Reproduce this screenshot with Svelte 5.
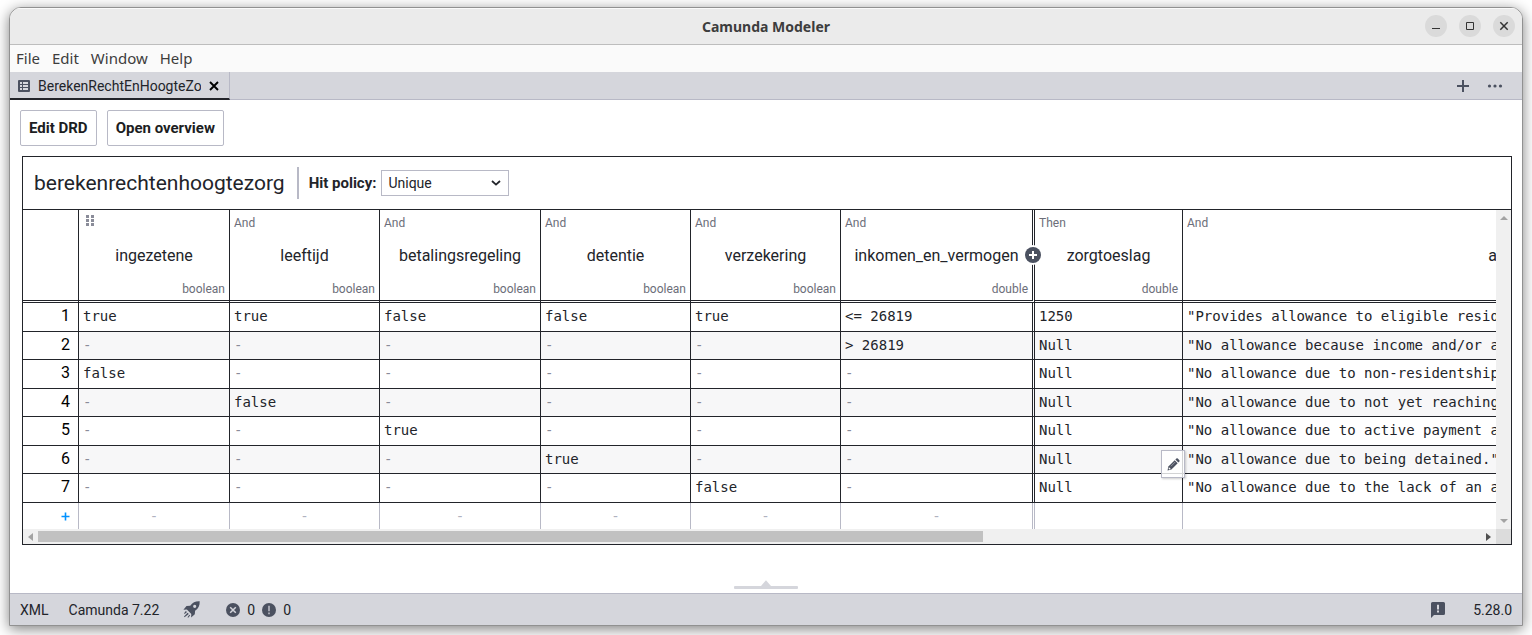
<script>
  const menu = ['File', 'Edit', 'Window', 'Help'];

  const columns = [
    { clause: '', name: 'ingezetene', type: 'boolean' },
    { clause: 'And', name: 'leeftijd', type: 'boolean' },
    { clause: 'And', name: 'betalingsregeling', type: 'boolean' },
    { clause: 'And', name: 'detentie', type: 'boolean' },
    { clause: 'And', name: 'verzekering', type: 'boolean' },
    { clause: 'And', name: 'inkomen_en_vermogen', type: 'double', last: true },
    { clause: 'Then', name: 'zorgtoeslag', type: 'double' },
    { clause: 'And', name: 'a', type: '' }
  ];

  const rules = [
    ['true', 'true', 'false', 'false', 'true', '<= 26819', '1250', '"Provides allowance to eligible resid'],
    ['-', '-', '-', '-', '-', '> 26819', 'Null', '"No allowance because income and/or a'],
    ['false', '-', '-', '-', '-', '-', 'Null', '"No allowance due to non-residentship'],
    ['-', 'false', '-', '-', '-', '-', 'Null', '"No allowance due to not yet reaching'],
    ['-', '-', 'true', '-', '-', '-', 'Null', '"No allowance due to active payment a'],
    ['-', '-', '-', 'true', '-', '-', 'Null', '"No allowance due to being detained."'],
    ['-', '-', '-', '-', 'false', '-', 'Null', '"No allowance due to the lack of an a']
  ];

  let policy = $state('Unique');
</script>

<div class="desktop">
  <div class="window">
    <header class="titlebar">
      <h1>Camunda Modeler</h1>
      <div class="controls">
        <button aria-label="Minimize"><svg width="22" height="22" viewBox="0 0 22 22"><path d="M7 13.5h8" /></svg></button>
        <button aria-label="Maximize"><svg width="22" height="22" viewBox="0 0 22 22"><path d="M7.5 7.5h7v7h-7z" /></svg></button>
        <button aria-label="Close"><svg width="22" height="22" viewBox="0 0 22 22"><path d="M7.3 7.3l7.4 7.4M14.7 7.3l-7.4 7.4" stroke-width="1.5" /></svg></button>
      </div>
    </header>

    <nav class="menubar">
      {#each menu as item}<button>{item}</button>{/each}
    </nav>

    <div class="tabs">
      <div class="tab">
        <svg width="12" height="12" viewBox="0 0 12 12">
          <rect width="12" height="12" rx="1" fill="#4b5160" />
          <path d="M2 2h2v2H2zM5 2h5v2H5zM2 5h2v2H2zM5 5h5v2H5zM2 8h2v2H2zM5 8h5v2H5z" fill="#d5d6dc" />
        </svg>
        <button class="tab-name">BerekenRechtEnHoogteZo</button>
        <button class="tab-close" aria-label="Close tab">
          <svg width="10" height="10" viewBox="0 0 10 10"><path d="M1 1l8 8M9 1l-8 8" stroke="#000" stroke-width="1.9" /></svg>
        </button>
      </div>
      <div class="tab-actions">
        <button aria-label="New tab"><svg width="12" height="12" viewBox="0 0 12 12"><path d="M6 0v12M0 6h12" stroke="#4b5160" stroke-width="2" /></svg></button>
        <button aria-label="More tabs"><svg width="16" height="4" viewBox="0 0 16 4" fill="#4b5160"><circle cx="2.5" cy="2" r="1.6" /><circle cx="8" cy="2" r="1.6" /><circle cx="13.5" cy="2" r="1.6" /></svg></button>
      </div>
    </div>

    <main>
      <div class="toolbar">
        <button>Edit DRD</button>
        <button>Open overview</button>
      </div>

      <section class="decision">
        <div class="decision-head">
          <h2>berekenrechtenhoogtezorg</h2>
          <div class="policy">
            <label for="hit-policy">Hit policy:</label>
            <div class="select">
              <select id="hit-policy" bind:value={policy}>
                <option>Unique</option>
                <option>First</option>
                <option>Collect</option>
              </select>
              <svg width="10" height="6" viewBox="0 0 10 6"><path d="M1 1l4 3.6L9 1" fill="none" stroke="#22242a" stroke-width="1.8" /></svg>
            </div>
          </div>
        </div>

        <div class="viewport">
          <div class="scroller">
            <table>
              <colgroup>
                <col class="c-index" /><col class="c-first" /><col class="c-std" /><col class="c-wide" />
                <col class="c-std" /><col class="c-std" /><col class="c-input-last" /><col class="c-output" /><col class="c-text" />
              </colgroup>
              <thead>
                <tr>
                  <th></th>
                  {#each columns as col}
                    <th class:edge={col.last}>
                      <div class="head-cell">
                        <span class="clause">
                          {#if col.clause}{col.clause}{:else}
                            <svg width="9" height="12" viewBox="0 0 9 12" fill="#8a8c99">
                              <path d="M0 0h3v3H0zM5 0h3v3H5zM0 4h3v3H0zM5 4h3v3H5zM0 8h3v3H0zM5 8h3v3H5z" />
                            </svg>
                          {/if}
                        </span>
                        <span class="name">{col.name}</span>
                        <span class="type">{col.type}</span>
                        {#if col.last}
                          <button class="add-column" aria-label="Add input">
                            <svg width="20" height="20" viewBox="0 0 20 20">
                              <circle cx="10" cy="10" r="10" fill="#fff" />
                              <circle cx="10" cy="10" r="8" fill="#4b5160" />
                              <path d="M10 6v8M6 10h8" stroke="#fff" stroke-width="2" />
                            </svg>
                          </button>
                        {/if}
                      </div>
                    </th>
                  {/each}
                </tr>
              </thead>
              <tbody>
                {#each rules as rule, r}
                  <tr>
                    <td class="index">{r + 1}</td>
                    {#each rule as value, c}
                      <td class:edge={c === 5} class:empty={value === '-'} class:anchor={r === 5 && c === 6}>
                        {value}
                        {#if r === 5 && c === 6}
                          <button class="edit" aria-label="Edit cell">
                            <svg width="13" height="13" viewBox="0 0 13 13" fill="#4b5160">
                              <path d="M0.5 12.5l0.9-3.9 6.3-6.3 3 3-6.3 6.3z" />
                              <path d="M8.4 1.6l1-1q0.7-0.6 1.4 0l1.6 1.6q0.6 0.7 0 1.4l-1 1z" />
                              <path d="M2 9.2l1.8 1.8-1.5 0.4-0.7-0.7z" fill="#fff" />
                              <path d="M4 8.2l4.2-4.2" stroke="#a7a9b3" stroke-width="0.8" />
                            </svg>
                          </button>
                        {/if}
                      </td>
                    {/each}
                  </tr>
                {/each}
              </tbody>
              <tfoot>
                <tr>
                  <td class="index">
                    <button class="add-rule" aria-label="Add rule"><svg width="9" height="9" viewBox="0 0 9 9"><path d="M4.5 0.5v8M0.5 4.5h8" stroke="#0091ff" stroke-width="1.6" /></svg></button>
                  </td>
                  {#each columns as _, c}<td class:edge={c === 5}>{c < 6 ? '-' : ''}</td>{/each}
                </tr>
              </tfoot>
            </table>
          </div>
          <div class="vbar">
            <svg width="8" height="4" viewBox="0 0 8 4"><path d="M0 4l4-4 4 4z" fill="#a3a3a3" /></svg>
            <svg width="8" height="4" viewBox="0 0 8 4"><path d="M0 0l4 4 4-4z" fill="#a3a3a3" /></svg>
          </div>
          <div class="hbar">
            <svg width="5" height="8" viewBox="0 0 5 8"><path d="M5 0L0 4l5 4z" fill="#a3a3a3" /></svg>
            <div class="track"><div class="thumb"></div></div>
            <svg width="5" height="8" viewBox="0 0 5 8"><path d="M0 0l5 4-5 4z" fill="#505050" /></svg>
          </div>
          <div class="corner"></div>
        </div>
      </section>

      <div class="panel-handle">
        <svg width="64" height="9" viewBox="0 0 64 9" fill="#d5d6dc"><path d="M27 6l5-5.8L37 6z" /><rect y="6" width="64" height="3" rx="1" /></svg>
      </div>
    </main>

    <footer>
      <button class="xml">XML</button>
      <button class="engine">Camunda 7.22</button>
      <button class="deploy" aria-label="Deploy">
        <svg width="17" height="17" viewBox="0 0 17 17" fill="#4b5160">
          <path fill-rule="evenodd" d="M16.7 0.2C12.6 0 9.6 1.3 7.2 4.7L3.5 5.1 0.4 8.8l3.5-0.2 4.4 4.5-0.2 3.4 3.7-3.2 0.3-3.5C15.4 7.4 16.9 4.4 16.7 0.2zM11.7 3.7a1.6 1.6 0 1 1 0 3.2a1.6 1.6 0 1 1 0-3.2z" />
          <path d="M2.8 10l1.2 1.1-2.3 1.8-0.6-0.6zM4.6 11.8l1.2 1.2-4.3 3.2-0.5-0.6zM6.3 13.7l0.8 0.9-1.9 2.2-0.7-0.6z" />
        </svg>
      </button>
      <button class="problems">
        <svg width="14" height="14" viewBox="0 0 14 14"><circle cx="7" cy="7" r="7" fill="#4b5160" /><path d="M4.2 4.2l5.6 5.6M9.8 4.2l-5.6 5.6" stroke="#d5d6dc" stroke-width="1.5" /></svg>
        <span>0</span>
        <svg width="14" height="14" viewBox="0 0 14 14"><circle cx="7" cy="7" r="7" fill="#4b5160" /><path d="M7 2.8v5.4M7 9.6v1.7" stroke="#a9abb5" stroke-width="1.9" /></svg>
        <span>0</span>
      </button>
      <button class="feedback" aria-label="Feedback">
        <svg width="14" height="16" viewBox="0 0 14 16"><path d="M1.5 0h11Q14 0 14 1.5v10Q14 13 12.5 13H3l-3 3V1.5Q0 0 1.5 0z" fill="#4b5160" /><path d="M7 2.8v4.6M7 8.6v2" stroke="#d5d6dc" stroke-width="2" /></svg>
      </button>
      <button>5.28.0</button>
    </footer>
  </div>
</div>

<style>
  :global(body) { background: #fff; }
  .desktop {
    box-sizing: border-box;
    min-height: 100vh;
    padding: 7px 9px 9px;
    display: flex;
    overflow: hidden;
    font: 14px/20px Roboto, "Liberation Sans", sans-serif;
    color: #22242a;
  }
  button {
    margin: 0;
    padding: 0;
    border: 0;
    background: none;
    font: inherit;
    color: inherit;
    display: flex;
    align-items: center;
  }
  svg { display: block; flex: none; }
  .window {
    flex: 1;
    min-width: 0;
    display: flex;
    flex-direction: column;
    border: 1px solid #919191;
    border-radius: 12px 12px 0 0;
    background: #fff;
    box-shadow: 0 3px 14px rgba(0, 0, 0, 0.5);
    overflow: hidden;
  }

  .titlebar {
    height: 36px;
    display: grid;
    grid-template-columns: 1fr auto 1fr;
    align-items: center;
    background: #ebebeb;
    border-bottom: 1px solid #bdbdbd;
    box-shadow: inset 0 1px #fafafa;
    color: #3d3d3d;
  }
  h1 {
    grid-column: 2;
    margin: 0;
    padding-top: 2px;
    font: bold 14px/20px "Noto Sans", sans-serif;
  }
  .controls { display: flex; justify-content: flex-end; gap: 12px; padding-right: 7px; }
  .controls button { border-radius: 50%; background: #dadada; }
  .controls path { fill: none; stroke: #333; }

  .menubar {
    box-sizing: border-box;
    height: 27px;
    display: flex;
    gap: 12px;
    padding: 0 0 2px 6px;
    background: #fafafa;
    color: #3d3d3d;
    font: 15px/20px "Noto Sans", sans-serif;
  }

  .tabs {
    height: 28px;
    display: flex;
    justify-content: space-between;
    background: #d5d6dc;
    box-shadow: inset 0 -1px #b8b9c6;
  }
  .tab {
    box-sizing: border-box;
    width: 220px;
    display: flex;
    align-items: center;
    gap: 8px;
    padding: 2px 10px 0 8px;
    border-right: 1px solid #b8b9c6;
    border-bottom: 2px solid #22242a;
  }
  .tab-name { flex: 1; min-width: 0; overflow: hidden; white-space: nowrap; justify-content: flex-start; }
  .tab-actions { display: flex; gap: 18px; padding-right: 19px; }

  main { flex: 1; display: flex; flex-direction: column; padding: 10px 10px 4px; }
  .toolbar { display: flex; gap: 10px; }
  .toolbar button {
    height: 36px;
    padding: 0 8px;
    border: 1px solid #b8b9c6;
    border-radius: 2px;
    font-weight: bold;
    font-size: 15px;
    color: #1c1d22;
  }
  .decision { margin: 10px 0 0 2px; border: 1px solid #22242a; }
  .decision-head {
    height: 52px;
    display: flex;
    align-items: center;
    gap: 12px;
    padding-left: 11px;
    border-bottom: 1px solid #22242a;
  }
  h2 { margin: 0; font: 21px/28px Roboto, sans-serif; }
  .policy {
    height: 32px;
    display: flex;
    align-items: center;
    gap: 5px;
    padding-left: 10px;
    border-left: 2px solid #b8b9c6;
  }
  .policy label { font-weight: bold; font-size: 15px; }
  .select { position: relative; display: flex; }
  select {
    box-sizing: border-box;
    width: 128px;
    height: 26px;
    padding: 0 6px;
    border: 1px solid #b8b9c6;
    border-radius: 0;
    background: #fff;
    appearance: none;
    font: inherit;
    color: inherit;
  }
  .select svg { position: absolute; right: 8px; top: 10px; pointer-events: none; }

  .viewport { display: grid; grid-template-columns: minmax(0, 1fr) 15px; grid-template-rows: auto 15px; }
  .scroller { overflow: hidden; }
  table { width: 1780px; table-layout: fixed; border-collapse: separate; border-spacing: 0; }
  .c-index { width: 56px; }
  .c-first { width: 151px; }
  .c-std { width: 150px; }
  .c-wide { width: 161px; }
  .c-input-last { width: 194px; }
  .c-output { width: 148px; }
  .c-text { width: auto; }
  th, td {
    box-sizing: border-box;
    border-right: 1px solid #22242a;
    border-bottom: 1px solid #22242a;
    white-space: nowrap;
  }
  th { height: 93px; padding: 0; border-bottom: 3px double #22242a; font-weight: normal; }
  th.edge, td.edge { border-right: 3px double #22242a; }
  .head-cell {
    position: relative;
    box-sizing: border-box;
    height: 90px;
    display: flex;
    flex-direction: column;
    justify-content: space-between;
    padding: 5px 4px 3px;
  }
  .clause { height: 16px; text-align: left; font-size: 12px; line-height: 16px; color: #6c6e79; }
  .clause svg { margin-left: 3px; }
  .name { font-size: 16px; line-height: 20px; }
  .type { height: 16px; text-align: right; font-size: 12px; line-height: 16px; color: #6c6e79; }
  .add-column { position: absolute; right: -11px; top: 35px; z-index: 1; }

  td { height: 29px; padding: 0 4px 2px; font: 14px/20px "DejaVu Sans Mono", monospace; }
  tbody tr:nth-child(even) td { height: 28px; background: #f7f7f8; }
  tbody tr:nth-child(even) td.index { background: #fff; }
  td.empty { color: #8a8c99; }
  td.index { padding-right: 8px; text-align: right; font: 16px/20px Roboto, sans-serif; color: #000; }
  .anchor { position: relative; }
  .edit {
    position: absolute;
    right: -3px;
    top: 4px;
    z-index: 1;
    width: 24px;
    height: 28px;
    justify-content: center;
    border: 1px solid #b8b9c6;
    background: rgba(255, 255, 255, 0.8);
    box-shadow: 1px 1px 2px rgba(0, 0, 0, 0.2);
  }
  tfoot td { height: 26px; padding-bottom: 0; border-bottom: 0; border-right-color: #b8b9c6; text-align: center; color: #b0b2bf; }
  tfoot td.edge { border-right-color: #b8b9c6; }
  .add-rule { margin-left: auto; }

  .vbar {
    display: flex;
    flex-direction: column;
    justify-content: space-between;
    align-items: center;
    padding: 6px 0;
    background: #f0f0f0;
  }
  .hbar { display: flex; align-items: center; gap: 5px; padding: 0 5px; background: #f0f0f0; }
  .track { flex: 1; display: grid; grid-template-columns: 19fr 10fr; }
  .thumb { height: 11px; background: #c1c1c1; }
  .corner { background: #dcdcdc; }

  .panel-handle { margin-top: auto; display: flex; justify-content: center; }

  footer {
    height: 31px;
    display: flex;
    align-items: center;
    padding: 0 10px;
    border-top: 1px solid #b8b9c6;
    background: #d5d6dc;
  }
  .engine { margin-left: 20px; }
  .deploy { margin-left: 24px; }
  .problems { margin-left: 26px; gap: 7px; }
  .feedback { margin: 0 28px 0 auto; }
</style>
